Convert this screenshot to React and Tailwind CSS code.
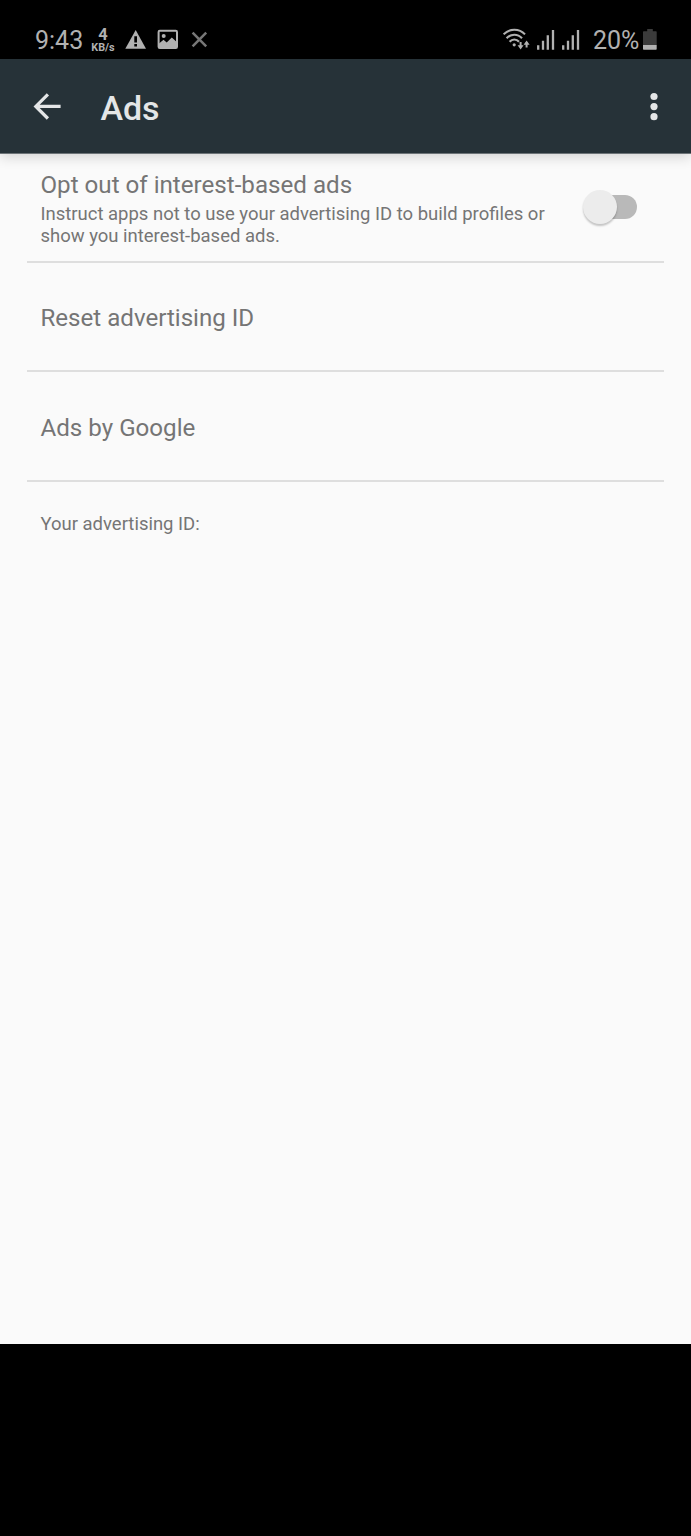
import React, { useState } from 'react';

const WarningIcon = () => (
    <svg className="ml-[9px] mt-[30px] shrink-0" width="22" height="20" viewBox="0 0 22 20">
        <path d="M10.7 0 21 18.8H0.3Z" fill="#b1b1b1" />
        <path d="M9.3 6.2h2.7v6.4H9.3zM9.3 14h2.7v2.6H9.3z" fill="#000" />
    </svg>
);

const PictureIcon = () => (
    <svg className="ml-[10px] mt-[29px] shrink-0" width="22" height="21" viewBox="0 0 22 21">
        <rect x="1.6" y="1.8" width="18.4" height="17.2" rx="1.2" fill="none" stroke="#b1b1b1" strokeWidth="2" />
        <circle cx="6.7" cy="7" r="2" fill="#b1b1b1" />
        <path d="M2 14.5 6.5 10.8l3.2 2.8L14.8 8.4 20 13.2v5.8H2Z" fill="#b1b1b1" />
    </svg>
);

const CloseIcon = () => (
    <svg className="ml-[12px] mt-[31px] shrink-0" width="17" height="17" viewBox="0 0 17 17">
        <path d="M1.6 1.6 15.2 15.4M15.2 1.6 1.6 15.4" stroke="#777" strokeWidth="2.5" />
    </svg>
);

const WifiIcon = () => (
    <svg className="mt-[28px] shrink-0" width="28" height="23" viewBox="0 0 28 23">
        <g fill="none" stroke="#b1b1b1" strokeWidth="2.1">
            <path d="M0.6 6.4C6.4 0.1 16.2 0.1 22 6.4" />
            <path d="M3.6 10.2C7.8 5.5 14.8 5.5 19 10.2" />
            <path d="M6.6 13.8C9.2 10.8 13.4 10.8 16 13.8" />
        </g>
        <circle cx="11.2" cy="16.8" r="1.6" fill="#b1b1b1" />
        <path d="M17.6 14v5M23.6 19.6v-5" stroke="#b1b1b1" strokeWidth="2" />
        <path d="M14.6 17.2h6l-3 4.2zM20.6 16.8h6l-3-4.4z" fill="#b1b1b1" />
    </svg>
);

const SignalIcon = ({ className }) => (
    <svg className={className} width="18" height="21" viewBox="0 0 18 21">
        <path d="M1.2 16.3v4.4M6 11.8v8.9M10.8 6.3v14.4M16 1v19.7" stroke="#b1b1b1" strokeWidth="2.3" />
    </svg>
);

const BatteryIcon = () => (
    <svg className="ml-[4px] mt-[29px] shrink-0" width="15" height="22" viewBox="0 0 15 22">
        <path d="M4.2 0h5.6v2.2h3.2a.7.7 0 0 1 .7.7V16H0V2.9a.7.7 0 0 1 .7-.7h3.5z" fill="#3b3b3b" />
        <path d="M0 16h13.7v4a.7.7 0 0 1-.7.7H.7a.7.7 0 0 1-.7-.7z" fill="#b1b1b1" />
    </svg>
);

const StatusBar = () => (
    <div className="flex h-[59px] items-start justify-between bg-black pl-[35px] pr-[33px] text-[#b1b1b1]">
        <div className="flex items-start">
            <span className="mt-[26px] w-[48px] text-[25px] leading-[30px]">9:43</span>
            <div className="ml-[7px] mt-[28px] flex w-[26px] flex-col items-center font-bold">
                <span className="text-[16.5px] leading-[14px]">4</span>
                <span className="text-[10.8px] leading-[12px]">KB/s</span>
            </div>
            <WarningIcon />
            <PictureIcon />
            <CloseIcon />
        </div>
        <div className="flex items-start">
            <WifiIcon />
            <SignalIcon className="ml-[6px] mt-[29px] shrink-0" />
            <SignalIcon className="ml-[7px] mt-[29px] shrink-0" />
            <span className="ml-[13px] mt-[26px] w-[46px] whitespace-nowrap text-[25px] leading-[30px] tracking-[-0.1px]">20%</span>
            <BatteryIcon />
        </div>
    </div>
);

const AppBar = () => (
    <header className="z-10 flex h-[95px] items-center border-b border-[#6c7377] bg-[#263238] pl-[33px] pr-[32px] shadow-[0_3px_12px_rgba(0,0,0,0.16)]">
        <button type="button" aria-label="Back">
            <svg width="29" height="28" viewBox="0 0 29 28">
                <path d="M27.6 14.4H3M14.9 2.3 2.8 14.4l12.1 12.1" fill="none" stroke="#e4e6e7" strokeWidth="3.2" />
            </svg>
        </button>
        <h1 className="ml-[38.5px] mt-[3px] text-[34px] font-medium leading-[40px] tracking-[-0.1px] text-[#e4e6e7]">Ads</h1>
        <button type="button" aria-label="More options" className="ml-auto">
            <svg width="10" height="29" viewBox="0 0 10 29">
                <circle cx="5" cy="4.5" r="3.6" fill="#e4e6e7" />
                <circle cx="5" cy="14.6" r="3.6" fill="#e4e6e7" />
                <circle cx="5" cy="24.7" r="3.6" fill="#e4e6e7" />
            </svg>
        </button>
    </header>
);

const Toggle = ({ checked, onChange }) => (
    <button
        type="button"
        role="switch"
        aria-checked={checked}
        onClick={() => onChange(!checked)}
        className="flex h-[24px] w-[47px] items-center rounded-full bg-[#b9b9b9]"
    >
        <span
            className={`h-[34px] w-[34px] shrink-0 rounded-full bg-[#ececec] shadow-[0_2px_2px_rgba(0,0,0,0.22)] ${
                checked ? 'ml-[20px]' : 'ml-[-7px]'
            }`}
        />
    </button>
);

const App = () => {
    const [optOut, setOptOut] = useState(false);

    return (
        <div className="flex h-[1536px] w-[691px] flex-col bg-black font-[Roboto,sans-serif]">
            <StatusBar />
            <AppBar />
            <main className="h-[1190px] bg-[#fafafa] px-[27px] text-[#757575]">
                <div className="flex h-[109px] items-start justify-between border-b-2 border-[#dedede] pl-[13.5px] pr-[27px]">
                    <div className="pt-[16px]">
                        <h2 className="text-[24.15px] leading-[30px]">Opt out of interest-based ads</h2>
                        <p className="w-[520px] pt-[3px] text-[18.48px] leading-[22px]">
                            Instruct apps not to use your advertising ID to build profiles or show you interest-based ads.
                        </p>
                    </div>
                    <div className="-ml-4 mt-[41px]">
                        <Toggle checked={optOut} onChange={setOptOut} />
                    </div>
                </div>
                <div className="flex h-[109px] items-center border-b-2 border-[#dedede] pl-[13.5px] pt-[2px]">
                    <span className="text-[24.1px] leading-[30px]">Reset advertising ID</span>
                </div>
                <div className="flex h-[110px] items-center border-b-2 border-[#dedede] pl-[13.5px] pt-[3px]">
                    <span className="text-[24.15px] leading-[30px]">Ads by Google</span>
                </div>
                <p className="pl-[13.5px] pt-[31px] text-[18.48px] leading-[22px]">Your advertising ID:</p>
            </main>
        </div>
    );
};

export default App;
